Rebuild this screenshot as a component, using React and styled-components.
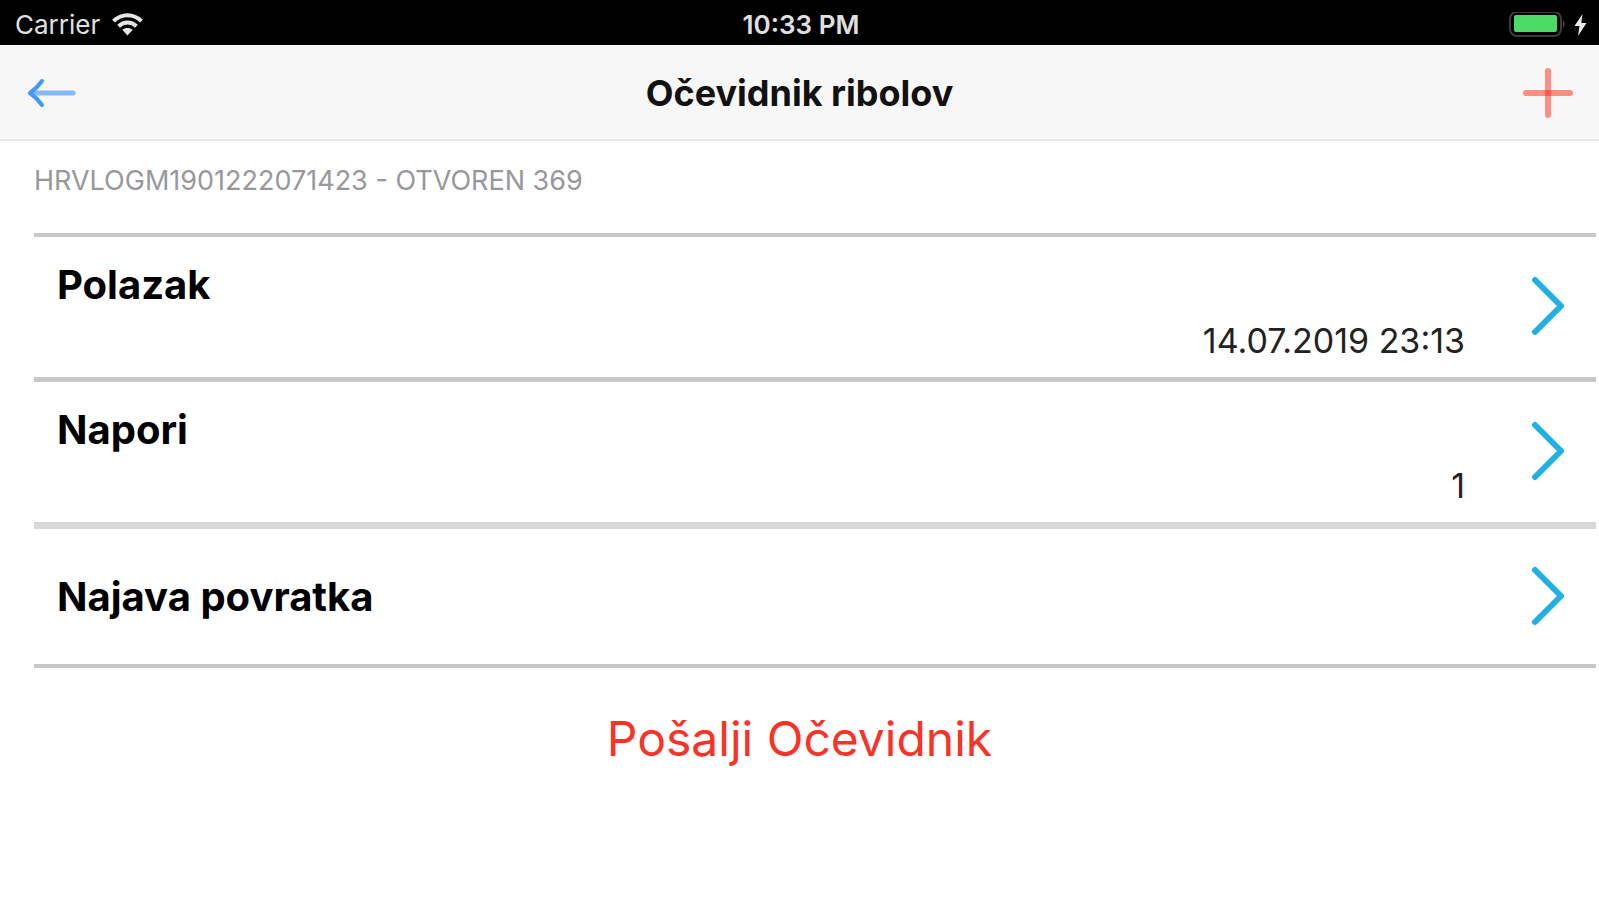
import React from 'react';
import styled, { createGlobalStyle } from 'styled-components';

const GlobalStyle = createGlobalStyle`
  *, *::before, *::after { box-sizing: border-box; }
  body {
    margin: 0;
    background: #fff;
    color: #000;
    font-family: Inter, "Liberation Sans", sans-serif;
  }
`;

const Screen = styled.div`
  min-height: 100vh;
`;

const StatusBar = styled.div`
  display: grid;
  grid-template-columns: 1fr auto 1fr;
  align-items: center;
  height: 45px;
  padding: 4px 12px 0 15px;
  background: #000;
  color: #e0e0e0;
  font-size: 26px;
  line-height: 32px;
`;

const StatusGroup = styled.div`
  display: flex;
  align-items: center;
  justify-content: ${(p) => (p.$end ? 'flex-end' : 'flex-start')};
  gap: ${(p) => (p.$end ? 8 : 12)}px;
`;

const Clock = styled.time`
  font-weight: 600;
`;

const NavBar = styled.header`
  display: grid;
  grid-template-columns: 1fr auto 1fr;
  align-items: center;
  height: 96px;
  padding: 2px 24px 0;
  background: #f7f7f7;
  border-bottom: 2px solid #e8e8e8;
`;

const Title = styled.h1`
  margin: 0;
  color: #111;
  font-size: 36px;
  font-weight: 700;
  line-height: 48px;
`;

const IconButton = styled.button`
  display: flex;
  justify-self: ${(p) => (p.$end ? 'end' : 'start')};
  padding: 0;
  border: 0;
  background: none;
  color: ${(p) => p.$color};
  cursor: pointer;
`;

const Content = styled.main`
  padding: 0 3px 0 34px;
`;

const SectionLabel = styled.h2`
  margin: 0;
  padding: 24px 0 36px;
  color: #98989c;
  font-size: 27px;
  font-weight: 400;
  line-height: 32px;
`;

const List = styled.ul`
  margin: 0;
  padding: 0;
  list-style: none;
  border-top: 4px solid #c8c8c8;
`;

const Item = styled.li`
  border-bottom: ${(p) => p.$line}px solid ${(p) => (p.$line > 5 ? '#d8d8d8' : '#c8c8c8')};
`;

const RowButton = styled.button`
  display: flex;
  align-items: center;
  gap: 66px;
  width: 100%;
  height: ${(p) => (p.$short ? 135 : 140)}px;
  padding: 0 31px 0 23px;
  border: 0;
  background: none;
  color: inherit;
  font-family: inherit;
  text-align: left;
  cursor: pointer;
`;

const RowText = styled.span`
  display: flex;
  flex: 1;
  flex-direction: column;
  gap: 6px;
  padding-top: ${(p) => (p.$short ? 0 : 10)}px;
`;

const RowTitle = styled.span`
  font-size: 40px;
  font-weight: 700;
  line-height: 52px;
`;

const RowValue = styled.span`
  color: #222;
  font-size: 34px;
  line-height: 48px;
  text-align: right;
`;

const Footer = styled.footer`
  display: flex;
  justify-content: center;
  padding-top: 39px;
`;

const SendButton = styled.button`
  padding: 0;
  border: 0;
  background: none;
  color: #fa3228;
  font-family: inherit;
  font-size: 48px;
  line-height: 64px;
  cursor: pointer;
`;

const WifiIcon = () => (
  <svg width="31" height="24" viewBox="0 0 31 24" aria-hidden="true">
    <g fill="none" stroke="#e6e6e6" strokeWidth="4">
      <path d="M1.5 8.200C9.500 0.300 21.500 0.300 29.500 8.200" />
      <path d="M6.600 13.200C11.700 8.300 19.300 8.300 24.400 13.200" />
    </g>
    <path d="M15.500 22.500L10.300 16.800C13.300 14.300 17.700 14.300 20.700 16.800Z" fill="#e6e6e6" />
  </svg>
);

const BatteryIcon = () => (
  <svg width="57" height="26" viewBox="0 0 57 26" aria-hidden="true">
    <rect x="1" y="0" width="51" height="24" rx="7" fill="none" stroke="#3c3c3c" strokeWidth="2" />
    <rect x="5" y="3" width="43" height="17" rx="2" fill="#4cd964" />
    <path d="M54 8Q57 12 54 16Z" fill="#4a4a4a" />
  </svg>
);

const BoltIcon = () => (
  <svg width="13" height="22" viewBox="0 0 13 22" aria-hidden="true">
    <path d="M8.500 0L0.500 12H5.500L4 22L12.500 9H7.300Z" fill="#ececec" />
  </svg>
);

const BackArrow = () => (
  <svg width="54" height="40" viewBox="0 0 54 40" fill="none" stroke="currentColor" strokeLinecap="round" strokeLinejoin="round" aria-hidden="true">
    <path d="M8 20H49" strokeWidth="5" stroke="#84b9fb" />
    <path d="M18 8Q13 15 6 20Q13 25 18 32" strokeWidth="4" />
  </svg>
);

const PlusIcon = () => (
  <svg width="54" height="54" viewBox="0 0 54 54" aria-hidden="true">
    <g stroke="currentColor" strokeWidth="6" strokeLinecap="round">
      <path d="M27 5V49" />
      <path d="M5 27H49" />
    </g>
    <rect x="24" y="24" width="6" height="6" fill="#ff5a48" />
  </svg>
);

const Chevron = () => (
  <svg width="34" height="62" viewBox="0 0 34 62" aria-hidden="true">
    <path d="M4 4L30 30L4 56" fill="none" stroke="#20b0e2" strokeWidth="6" strokeLinecap="round" strokeLinejoin="round" />
  </svg>
);

const rows = [
  { title: 'Polazak', value: '14.07.2019 23:13', line: 5 },
  { title: 'Napori', value: '1', line: 7 },
  { title: 'Najava povratka', line: 4 },
];

export default function App() {
  return (
    <Screen>
      <GlobalStyle />
      <StatusBar>
        <StatusGroup>
          <span>Carrier</span>
          <WifiIcon />
        </StatusGroup>
        <Clock>10:33 PM</Clock>
        <StatusGroup $end>
          <BatteryIcon />
          <BoltIcon />
        </StatusGroup>
      </StatusBar>
      <NavBar>
        <IconButton type="button" aria-label="Natrag" $color="#4598fb">
          <BackArrow />
        </IconButton>
        <Title>Očevidnik ribolov</Title>
        <IconButton type="button" aria-label="Dodaj" $color="#fd8f82" $end>
          <PlusIcon />
        </IconButton>
      </NavBar>
      <Content>
        <SectionLabel>HRVLOGM1901222071423 - OTVOREN 369</SectionLabel>
        <List>
          {rows.map((row) => (
            <Item key={row.title} $line={row.line}>
              <RowButton type="button" $short={!row.value}>
                <RowText $short={!row.value}>
                  <RowTitle>{row.title}</RowTitle>
                  {row.value && <RowValue>{row.value}</RowValue>}
                </RowText>
                <Chevron />
              </RowButton>
            </Item>
          ))}
        </List>
      </Content>
      <Footer>
        <SendButton type="button">Pošalji Očevidnik</SendButton>
      </Footer>
    </Screen>
  );
}
